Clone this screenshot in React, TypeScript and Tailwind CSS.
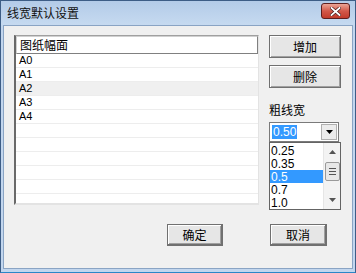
const cjk = "font-['Noto_Sans_CJK_SC','Noto_Sans',sans-serif]";
const latin = "font-['Liberation_Sans','Noto_Sans_CJK_SC',sans-serif]";

const rows = ["A0", "A1", "A2", "A3", "A4", "", "", "", "", "", ""];
const widths = ["0.25", "0.35", "0.5", "0.7", "1.0"];

const Button = ({ label, className }: { label: string; className?: string }) => (
  <button
    className={`flex items-center justify-center border border-[#707070] bg-[#e6e6e6] shadow-[inset_1px_1px_0_#fff,inset_-1px_-1px_0_#a0a0a0] text-[12px] text-black ${cjk} ${className ?? ""}`}
  >
    {label}
  </button>
);

const App = () => {
  return (
    <div className="w-[356px] h-[273px] flex flex-col border border-[#3d5d86] border-b-[#2a87c8] bg-[#c2d6ee] px-[2px] pb-[3px]">
      {/* title bar */}
      <div className="h-[24px] flex items-center justify-between bg-gradient-to-b from-[#b3cbe8] to-[#c6daf0] -mx-[2px] pl-[6px] pr-[5px]">
        <span className={`text-[12px] text-[#111] ${cjk}`}>线宽默认设置</span>
        <div className="w-[29px] h-[16px] mb-[4px] flex items-center justify-center rounded-[3px] border border-[#5e1f1f] bg-gradient-to-b from-[#eaa395] via-[#d2584a] to-[#c23b2c]">
          <svg width="11" height="9" viewBox="0 0 11 9">
            <path d="M1.5 1 L9.5 8 M9.5 1 L1.5 8" stroke="#4a1a1a" strokeWidth="3.2" strokeLinecap="square" />
            <path d="M1.5 1 L9.5 8 M9.5 1 L1.5 8" stroke="#fff" strokeWidth="1.8" strokeLinecap="square" />
          </svg>
        </div>
      </div>

      {/* client */}
      <div className="flex-1 flex flex-col border border-[#8aa4c4] bg-[#f0f0f0] pl-[10px] pt-[9px]">
        <div className="flex">
          {/* list view */}
          <div className="w-[245px] h-[170px] flex flex-col border-t border-l-2 border-t-[#a0a0a0] border-l-[#696969] border-r border-b-2 border-r-[#e3e3e3] border-b-[#e3e3e3] bg-white overflow-hidden">
            <div className={`h-[18px] flex items-center border border-[#808080] border-t-[#d0d0d0] border-l-[#d0d0d0] bg-white pl-[3px] text-[12px] ${cjk}`}>
              图纸幅面
            </div>
            {rows.map((r, i) => (
              <div
                key={i}
                className={`h-[14px] shrink-0 flex items-center border-b border-[#ededed] pl-[3px] text-[11px] leading-none text-black ${latin} ${i === 2 ? "bg-[#f0f0f0]" : ""}`}
              >
                {r}
              </div>
            ))}
          </div>

          {/* right column */}
          <div className="ml-[10px] w-[72px] flex flex-col">
            <Button label="增加" className="h-[23px] w-[72px]" />
            <Button label="删除" className="h-[23px] w-[72px] mt-[7px]" />
            <span className={`mt-[14px] text-[12px] leading-[16px] text-black ${cjk}`}>粗线宽</span>
            <div className="relative mt-[4px]">
              <div className="w-[70px] h-[20px] flex items-center border border-[#7a7a7a] bg-white pl-[2px] pr-[1px]">
                <span className={`bg-[#3399ff] text-white text-[12px] leading-[14px] px-[1px] ${latin}`}>0.50</span>
                <div className="ml-auto w-[16px] h-[16px] flex items-center justify-center border border-[#b0b0b0] bg-[#ececec]">
                  <svg width="7" height="4" viewBox="0 0 7 4">
                    <path d="M0 0 H7 L3.5 4 Z" fill="#000" />
                  </svg>
                </div>
              </div>
              {/* dropdown */}
              <div className="absolute left-0 top-[20px] w-[72px] h-[68px] flex border border-[#646464] bg-white">
                <div className="flex-1 flex flex-col pt-[1px]">
                  {widths.map((w) => (
                    <div
                      key={w}
                      className={`h-[13px] flex items-center pl-[1px] text-[12px] ${latin} ${w === "0.5" ? "bg-[#3399ff] text-white" : "text-black"}`}
                    >
                      {w}
                    </div>
                  ))}
                </div>
                <div className="w-[17px] flex flex-col items-center bg-[#f3f3f3] border-l border-[#e6e6e6]">
                  <svg className="mt-[7px]" width="7" height="4" viewBox="0 0 7 4">
                    <path d="M3.5 0 L7 4 H0 Z" fill="#555" />
                  </svg>
                  <div className="mt-[8px] w-[15px] h-[19px] flex flex-col items-center justify-center gap-[2px] rounded-[2px] border border-[#9a9a9a] bg-[#e8e8e8]">
                    <div className="w-[7px] h-px bg-[#555]" />
                    <div className="w-[7px] h-px bg-[#555]" />
                    <div className="w-[7px] h-px bg-[#555]" />
                  </div>
                  <svg className="mt-auto mb-[7px]" width="7" height="4" viewBox="0 0 7 4">
                    <path d="M0 0 H7 L3.5 4 Z" fill="#555" />
                  </svg>
                </div>
              </div>
            </div>
          </div>
        </div>

        {/* bottom buttons */}
        <div className="flex mt-[19px] pl-[153px]">
          <Button label="确定" className="w-[56px] h-[22px] border-[#3c3c3c] border-r-2 border-b-2" />
          <Button label="取消" className="w-[57px] h-[22px] ml-[47px] border-r-2 border-b-2 border-[#606060]" />
        </div>
      </div>
    </div>
  );
};

export default App;
